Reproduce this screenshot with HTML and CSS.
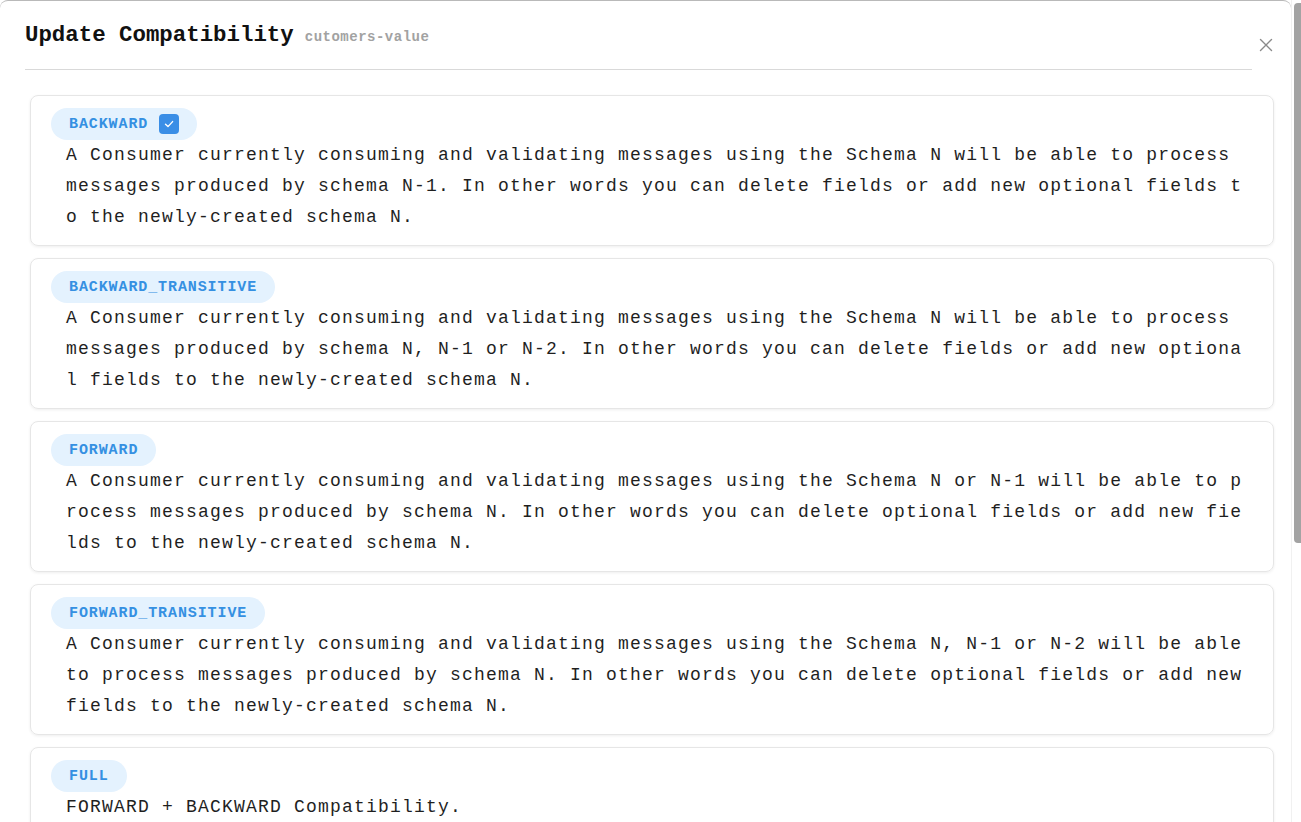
FILE: index.html
```html
<!DOCTYPE html>
<html lang="en">
<head>
<meta charset="utf-8">
<title>Update Compatibility</title>
<link rel="stylesheet" href="styles.css">
</head>
<body>
<div class="page">
  <div class="modal">
    <div class="header">
      <h1 class="title">Update Compatibility</h1>
      <span class="subject">cutomers-value</span>
    </div>
    <button class="close" aria-label="Close">
      <svg width="14" height="14" viewBox="0 0 14 14"><path d="M1.5 1.5 L12.5 12.5 M12.5 1.5 L1.5 12.5" stroke="#8a8a8a" stroke-width="1.4" fill="none" stroke-linecap="round"/></svg>
    </button>
    <div class="list">
      <div class="card">
        <div class="tag">BACKWARD<span class="check"><svg width="12" height="12" viewBox="0 0 12 12"><path d="M2.5 6.2 L5 8.6 L9.6 3.6" stroke="#fff" stroke-width="1.4" fill="none" stroke-linecap="round" stroke-linejoin="round"/></svg></span></div>
        <p class="desc">A Consumer currently consuming and validating messages using the Schema N will be able to process messages produced by schema N-1. In other words you can delete fields or add new optional fields to the newly-created schema N.</p>
      </div>
      <div class="card">
        <div class="tag">BACKWARD_TRANSITIVE</div>
        <p class="desc">A Consumer currently consuming and validating messages using the Schema N will be able to process messages produced by schema N, N-1 or N-2. In other words you can delete fields or add new optional fields to the newly-created schema N.</p>
      </div>
      <div class="card">
        <div class="tag">FORWARD</div>
        <p class="desc">A Consumer currently consuming and validating messages using the Schema N or N-1 will be able to process messages produced by schema N. In other words you can delete optional fields or add new fields to the newly-created schema N.</p>
      </div>
      <div class="card">
        <div class="tag">FORWARD_TRANSITIVE</div>
        <p class="desc">A Consumer currently consuming and validating messages using the Schema N, N-1 or N-2 will be able to process messages produced by schema N. In other words you can delete optional fields or add new fields to the newly-created schema N.</p>
      </div>
      <div class="card">
        <div class="tag">FULL</div>
        <p class="desc">FORWARD + BACKWARD Compatibility.</p>
      </div>
      <div class="card">
        <div class="tag">FULL_TRANSITIVE</div>
        <p class="desc">BACKWARD_TRANSITIVE + FORWARD_TRANSITIVE Compatibility.</p>
      </div>
      <div class="card">
        <div class="tag">NONE</div>
        <p class="desc">No compatibility checking.</p>
      </div>
    </div>
    <div class="footer">
      <button class="btn">Cancel</button>
      <button class="btn primary">Submit</button>
    </div>
  </div>
  <div class="scrollbar"><div class="thumb"></div></div>
</div>
</body>
</html>
```

FILE: styles.css
```css
html {
  background: #ffffff;
}
body {
  margin: 0;
  font-family: "Liberation Mono", "DejaVu Sans Mono", monospace;
  color: #1f1f1f;
}
.page {
  display: flex;
  align-items: flex-start;
}
.modal {
  position: relative;
  flex: 1;
  min-width: 0;
  background: #ffffff;
  border-top: 1px solid #b9b9b9;
  border-radius: 8px 8px 0 0;
  padding-bottom: 40px;
}
.scrollbar {
  width: 10px;
  flex: none;
  align-self: stretch;
  background: #ffffff;
  border-left: 1px solid #f1f1f1;
  box-sizing: border-box;
  padding: 3px 0 0 2px;
}
.thumb {
  height: 540px;
  background: #a3a3a3;
  border-radius: 4px 0 0 4px;
}
.header {
  display: flex;
  align-items: baseline;
  margin: 0 39px 0 25px;
  padding: 20px 0 20px;
  border-bottom: 1px solid #d9d9d9;
}
.title {
  margin: 0;
  font-size: 22.4px;
  line-height: 28px;
  font-weight: 700;
  color: #111111;
}
.subject {
  margin-left: 11px;
  font-size: 14px;
  font-weight: 700;
  letter-spacing: 0.5px;
  color: #a2a2a2;
}
.close {
  position: absolute;
  top: 36px;
  right: 17px;
  width: 16px;
  height: 16px;
  padding: 0;
  border: 0;
  background: transparent;
  display: flex;
  align-items: center;
  justify-content: center;
}
.list {
  display: flex;
  flex-direction: column;
  gap: 12px;
  padding: 25px 17px 0 30px;
}
.card {
  border: 1px solid #e6e6e6;
  border-radius: 8px;
  box-shadow: 0 1px 3px rgba(0, 0, 0, 0.07);
  padding: 12px 21px 12px 20px;
}
.tag {
  display: inline-flex;
  align-items: center;
  height: 32px;
  padding: 0 18px;
  border-radius: 16px;
  background: #e4f2fe;
  color: #3590e2;
  font-size: 15px;
  font-weight: 700;
  letter-spacing: 0.9px;
}
.check {
  display: inline-flex;
  align-items: center;
  justify-content: center;
  width: 20px;
  height: 20px;
  margin-left: 11px;
  border-radius: 4px;
  background: #3a8ee6;
}
.desc {
  margin: 0;
  padding-left: 15px;
  font-size: 18px;
  line-height: 31px;
  letter-spacing: 1.2px;
  word-break: break-all;
  color: #1f1f1f;
}
.footer {
  display: flex;
  justify-content: flex-end;
  gap: 12px;
  padding: 24px 17px 0 30px;
}
.btn {
  font-family: "Liberation Mono", monospace;
  font-size: 15px;
  padding: 8px 18px;
  border: 1px solid #d0d0d0;
  border-radius: 6px;
  background: #ffffff;
  color: #333333;
}
.btn.primary {
  background: #3a8ee6;
  border-color: #3a8ee6;
  color: #ffffff;
}
```
